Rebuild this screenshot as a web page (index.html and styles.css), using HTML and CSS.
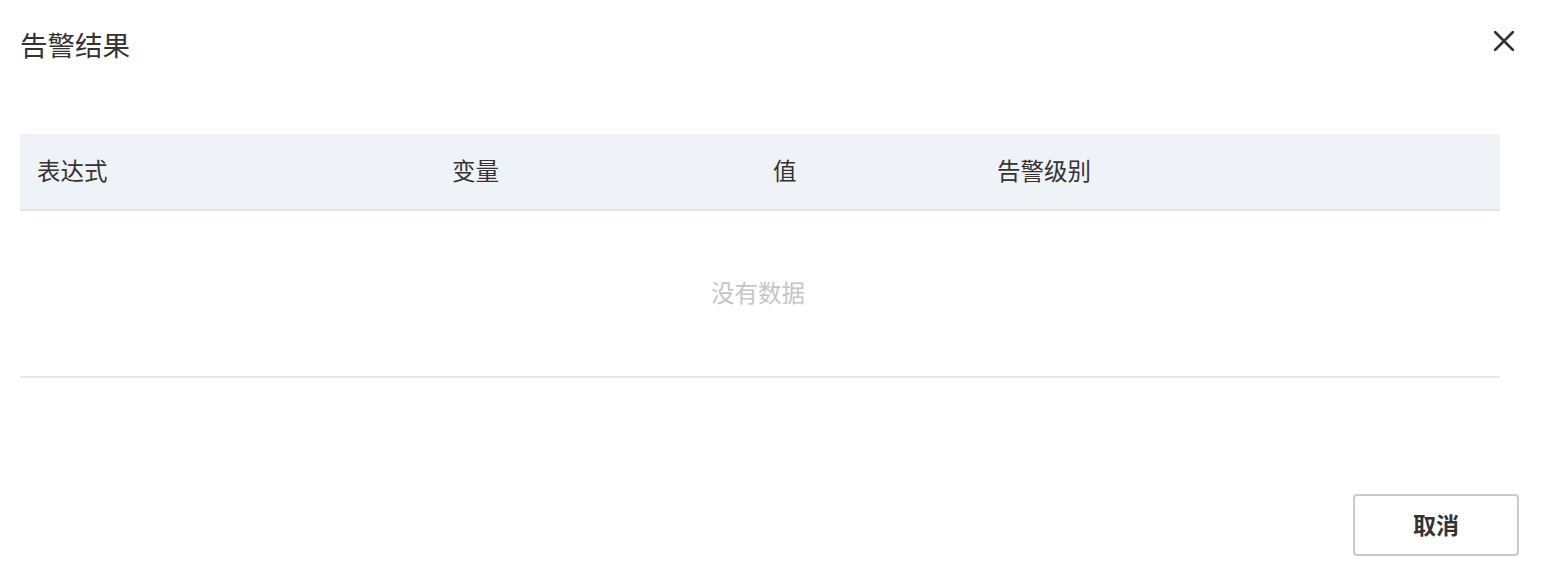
FILE: index.html
```html
<!DOCTYPE html>
<html lang="zh-CN">
<head>
<meta charset="utf-8">
<title>告警结果</title>
<link rel="stylesheet" href="styles.css">
</head>
<body>
<div class="dialog">
  <div class="dialog-header">
    <span class="dialog-title">告警结果</span>
    <button class="close-btn" aria-label="关闭">
      <svg width="20" height="20" viewBox="0 0 20 20"><path d="M1 1L19 19M19 1L1 19" stroke="#333" stroke-width="2.6" stroke-linecap="round" fill="none"/></svg>
    </button>
  </div>
  <div class="dialog-body">
    <div class="table">
      <div class="thead">
        <div class="th">表达式</div>
        <div class="th">变量</div>
        <div class="th">值</div>
        <div class="th">告警级别</div>
      </div>
      <div class="empty">没有数据</div>
    </div>
  </div>
  <div class="dialog-footer">
    <button class="btn">取消</button>
  </div>
</div>
</body>
</html>
```

FILE: styles.css
```css
* { box-sizing: border-box; }
html, body { margin: 0; padding: 0; background: #fff; }
body {
  font-family: "Noto Sans CJK SC", "Noto Sans", sans-serif;
  color: #333;
  width: 1562px;
  height: 584px;
  overflow: hidden;
}
.dialog { display: flex; flex-direction: column; }
.dialog-header {
  display: flex;
  justify-content: space-between;
  align-items: center;
  height: 40px;
  margin-top: 24px;
  padding-left: 20px;
  padding-right: 48px;
}
.dialog-title {
  font-size: 27.5px;
  line-height: 40px;
  color: #333;
}
.close-btn {
  border: 0;
  background: none;
  padding: 0;
  width: 20px;
  height: 20px;
  margin-top: -6px;
  display: flex;
  cursor: pointer;
}
.dialog-body { padding: 70px 62px 0 20px; }
.table { width: 1480px; border-bottom: 2px solid #e7e8eb; }
.thead {
  display: grid;
  grid-template-columns: 415px 321px 224px 1fr;
  height: 77px;
  background: #eff2f7;
  border-bottom: 2px solid #e3e5e8;
  align-items: center;
  padding-bottom: 4px;
}
.th {
  padding-left: 17px;
  font-size: 23.5px;
  color: #333;
  line-height: 30px;
}
.empty {
  height: 165px;
  display: flex;
  align-items: center;
  justify-content: center;
  font-size: 23.5px;
  color: #c3c5c9;
  padding-right: 4px;
  padding-bottom: 4px;
}
.dialog-footer {
  display: flex;
  justify-content: flex-end;
  padding: 116px 43px 0 0;
}
.btn {
  width: 166px;
  height: 62px;
  border: 2px solid #c8c9cc;
  border-radius: 4px;
  background: #fff;
  font-family: inherit;
  font-size: 23px;
  font-weight: 700;
  color: #333;
  cursor: pointer;
  padding-bottom: 3px;
}
```
